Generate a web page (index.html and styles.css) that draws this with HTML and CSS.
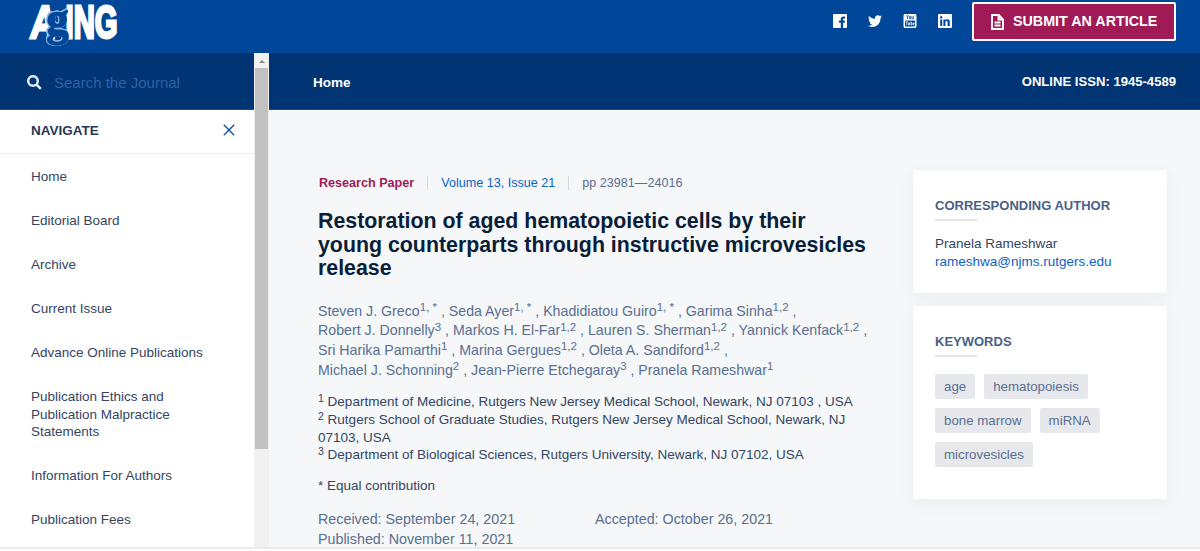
FILE: index.html
```html
<!DOCTYPE html>
<html lang="en">
<head>
    <meta charset="UTF-8">
    <meta name="viewport" content="width=device-width, initial-scale=1.0">
    <title>Aging</title>
    <link rel="stylesheet" href="styles.css">
</head>
<body>
    <header class="header">
        <svg class="logo" width="110" height="53" viewBox="0 0 110 53" role="img" aria-label="Aging">
            <text class="logo-text" x="7" y="37.500" textLength="25" lengthAdjust="spacingAndGlyphs" transform="translate(1.500 0) skewX(-6)">A</text>
            <text class="logo-text" x="40.500" y="37.500" textLength="52" lengthAdjust="spacingAndGlyphs">ING</text>
            <text class="logo-g" x="21.500" y="34.500" textLength="22" lengthAdjust="spacingAndGlyphs">g</text>
        </svg>
        <div class="header-right">
            <svg class="social" viewBox="0 0 14 14"><path fill-rule="evenodd" d="M1 0h12q1 0 1 1v12q0 1-1 1h-3V8.700h1.700l.3-2.100h-2V5.400q0-1 1-1h1.100V2.500q-4.300-.6-4.300 2.600v1.500H6v2.100h1.800V14H1q-1 0-1-1V1q0-1 1-1z"/></svg>
            <svg class="social" viewBox="0 0 14 14"><path d="M14 2.300q-.6.900-1.400 1.500C12.700 9 9 13 4.600 13Q2 13 0 11.700q2.300.2 4.200-1.200-2-.2-2.700-2 .7.100 1.300-.1Q.6 7.800.6 5.500q.6.300 1.200.4Q-.1 4.300 1 2q2.500 2.900 6 3C6.400 1.800 9.700 0 11.900 2q1-.2 1.800-.7-.3 1-1.200 1.600.8-.1 1.500-.6z"/></svg>
            <svg class="social" viewBox="0 0 14 14"><path d="M2 0h10q1.500 0 1.500 2v10q0 2-1.500 2H2q-1.500 0-1.500-2V2q0-2 1.500-2z"/><path class="cut" d="M3.500 1.200l1 2v1.800M5.500 1.200l-1 2M6.300 2.700v2h1.300v-2H6.300M8.900 2.200v2.600h1.500V2.200"/><rect class="cut-fill" x="2" y="6.500" width="10" height="6" rx="1"/><path class="tube" d="M2.800 7.800h2M3.800 7.800v3.400M5.500 8.600v2.300h1V8.600M8 7.500v3.400h1v-2H8M11.200 9.900h-1V9h1v.9M10.200 10v.9h1"/></svg>
            <svg class="social" viewBox="0 0 14 14"><path fill-rule="evenodd" d="M1 0h12q1 0 1 1v12q0 1-1 1H1q-1 0-1-1V1q0-1 1-1zM2.200 5.400V12h2V5.400zM3.200 2.100a1.200 1.200 0 1 0 .01 0zM5.400 5.400V12h2V8.200q.1-1.200 1.200-1.200 1 0 1 1.300V12h2.200V8q0-2.800-2.400-2.800-1.300 0-2 1v-.8z"/></svg>
            <a class="submit" href="#">
                <svg width="13" height="16" viewBox="0 0 13 16"><path d="M1 1h6.700L12 5.300V15H1zM7.500 1v4.500H12M3.500 8.500h6M3.500 11.500h6"/></svg>
                <span>SUBMIT AN ARTICLE</span>
            </a>
        </div>
    </header>

    <div class="page">
        <aside class="sidebar">
            <div class="search">
                <svg width="15" height="15" viewBox="0 0 15 15"><circle cx="6" cy="6" r="4.800"/><path d="M9.500 9.500l4.300 4.300"/></svg>
                <span>Search the Journal</span>
            </div>
            <div class="nav-title">
                <span>NAVIGATE</span>
                <svg width="12" height="12" viewBox="0 0 12 12"><path d="M.8.800l10.400 10.400M11.200.8L.8 11.200"/></svg>
            </div>
            <ul class="nav">
                <li>Home</li>
                <li>Editorial Board</li>
                <li>Archive</li>
                <li>Current Issue</li>
                <li>Advance Online Publications</li>
                <li>Publication Ethics and<br>Publication Malpractice<br>Statements</li>
                <li>Information For Authors</li>
                <li>Publication Fees</li>
            </ul>
        </aside>
        <div class="scrollbar">
            <div class="scroll-up"></div>
            <div class="scroll-thumb"></div>
        </div>

        <main class="main">
            <div class="topbar">
                <span class="crumb">Home</span>
                <span class="issn">ONLINE ISSN: 1945-4589</span>
            </div>
            <div class="content">
                <article class="article">
                    <div class="meta">
                        <span class="type">Research Paper</span>
                        <a class="volume" href="#">Volume 13, Issue 21</a>
                        <span class="pages">pp 23981—24016</span>
                    </div>
                    <h1>Restoration of aged hematopoietic cells by their<br>young counterparts through instructive microvesicles<br>release</h1>
                    <p class="authors">Steven J. Greco<sup>1, *</sup> , Seda Ayer<sup>1, *</sup> , Khadidiatou Guiro<sup>1, *</sup> , Garima Sinha<sup>1,2</sup> ,<br>Robert J. Donnelly<sup>3</sup> , Markos H. El-Far<sup>1,2</sup> , Lauren S. Sherman<sup>1,2</sup> , Yannick Kenfack<sup>1,2</sup> ,<br>Sri Harika Pamarthi<sup>1</sup> , Marina Gergues<sup>1,2</sup> , Oleta A. Sandiford<sup>1,2</sup> ,<br>Michael J. Schonning<sup>2</sup> , Jean-Pierre Etchegaray<sup>3</sup> , Pranela Rameshwar<sup>1</sup></p>
                    <p class="affiliations"><sup>1</sup> Department of Medicine, Rutgers New Jersey Medical School, Newark, NJ 07103 , USA<br><sup>2</sup> Rutgers School of Graduate Studies, Rutgers New Jersey Medical School, Newark, NJ<br>07103, USA<br><sup>3</sup> Department of Biological Sciences, Rutgers University, Newark, NJ 07102, USA</p>
                    <p class="equal">* Equal contribution</p>
                    <div class="dates">
                        <span>Received: September 24, 2021</span>
                        <span>Accepted: October 26, 2021</span>
                        <span>Published: November 11, 2021</span>
                    </div>
                </article>
                <div class="cards">
                    <section class="card author-card">
                        <h2>CORRESPONDING AUTHOR</h2>
                        <p>Pranela Rameshwar<br><a href="#">rameshwa@njms.rutgers.edu</a></p>
                    </section>
                    <section class="card keyword-card">
                        <h2>KEYWORDS</h2>
                        <div class="tags">
                            <span>age</span>
                            <span>hematopoiesis</span>
                            <span>bone marrow</span>
                            <span>miRNA</span>
                            <span>microvesicles</span>
                        </div>
                    </section>
                </div>
            </div>
        </main>
    </div>
</body>
</html>
```

FILE: styles.css
```css
* {
    box-sizing: border-box;
}
body {
    margin: 0;
    height: 551px;
    overflow: hidden;
    background: #fff;
    color: #344563;
    font-family: "Liberation Sans", Arial, sans-serif;
    font-size: 13.5px;
    line-height: 17.6px;
    white-space: nowrap;
}
a {
    color: #0c62c7;
    text-decoration: none;
}
.header {
    display: flex;
    justify-content: space-between;
    height: 53px;
    padding-left: 25px;
    padding-right: 24px;
    background: #004799;
}
.logo {
    overflow: visible;
}
.logo-text {
    font-size: 46px;
    font-weight: bold;
    fill: #fff;
    stroke: #fff;
    stroke-width: 3px;
}
.logo-g {
    font-family: "Liberation Serif", serif;
    font-size: 49px;
    font-weight: bold;
    fill: #004799;
    stroke: #004799;
    stroke-width: 1.6px;
    filter: drop-shadow(0.6px 0 0 #8fb3de) drop-shadow(-0.6px 0 0 #8fb3de) drop-shadow(0 0.5px 0 #8fb3de) drop-shadow(0 -0.5px 0 #8fb3de);
}
.header-right {
    display: flex;
    align-items: flex-start;
}
.social {
    width: 14px;
    height: 14px;
    margin: 14px 21px 0 0;
    fill: #fff;
    position: relative;
    left: 1px;
}
.cut {
    fill: none;
    stroke: #004799;
    stroke-width: 0.8px;
}
.cut-fill {
    fill: #004799;
}
.tube {
    fill: none;
    stroke: #fff;
    stroke-width: 0.8px;
}
.submit {
    display: flex;
    align-items: center;
    width: 204px;
    height: 39px;
    margin-top: 2px;
    padding-left: 17px;
    border: 2px solid #fff;
    border-radius: 2px;
    background: #a01a56;
    color: #fff;
    font-size: 14.3px;
    font-weight: bold;
}
.submit svg {
    margin-right: 9px;
    fill: none;
    stroke: #fff;
    stroke-width: 1.9px;
}
.page {
    display: flex;
    height: 496px;
    border-bottom: 2px solid #e9eaec;
    background: #f5f7f9;
}
.sidebar {
    width: 254px;
    background: #fff;
}
.search {
    display: flex;
    align-items: center;
    height: 57px;
    padding: 3px 0 0 27px;
    border-bottom: 1px solid #1d4f8f;
    background: #003473;
    color: #2d62a5;
    font-size: 15px;
}
.search svg {
    margin-right: 12px;
    fill: none;
    stroke: #dfeaf7;
    stroke-width: 2.5px;
}
.nav-title {
    display: flex;
    align-items: center;
    justify-content: space-between;
    height: 44px;
    padding: 0 19px 1px 31px;
    border-bottom: 1px solid #eceef2;
    color: #253858;
    font-weight: bold;
}
.nav-title svg {
    position: relative;
    top: -1px;
    fill: none;
    stroke: #0b4c9c;
    stroke-width: 1.3px;
}
.nav {
    margin: 0;
    padding: 1px 0 0;
    list-style: none;
}
.nav li {
    padding: 13.2px 0 13.2px 31px;
}
.scrollbar {
    width: 15px;
    padding: 0 1px;
    background: #f1f1f1;
}
.scroll-up {
    height: 15px;
    padding: 7px 3.5px 0;
}
.scroll-up::before {
    content: "";
    display: block;
    width: 0;
    border: 3px solid transparent;
    border-top: 0;
    border-bottom: 3px solid #8a8a8a;
}
.scroll-thumb {
    height: 381px;
    background: #c1c1c1;
}
.main {
    flex: 1;
}
.topbar {
    display: flex;
    justify-content: space-between;
    height: 57px;
    padding: 21px 24px 0 44px;
    border-bottom: 1px solid #1d4f8f;
    background: #003473;
    color: #fff;
    font-weight: bold;
}
.issn {
    margin-top: -1px;
    font-size: 13.1px;
}
.content {
    display: flex;
    padding: 60px 33px 0 49px;
}
.article {
    width: 595px;
}
.meta {
    display: flex;
    padding: 6px 0 0 1px;
    font-size: 12.6px;
    line-height: 14px;
}
.type {
    color: #a01a56;
    font-weight: bold;
}
.volume,
.pages {
    margin-left: 13px;
    padding-left: 13px;
    border-left: 1px solid #d3d7de;
}
.pages {
    color: #5a6f91;
}
h1 {
    margin: 20px 0 0;
    color: #091e38;
    font-size: 21.35px;
    line-height: 23.5px;
}
sup {
    font-size: 81%;
    line-height: 0;
    position: relative;
    top: -0.4em;
    vertical-align: baseline;
}
.authors {
    margin: 21px 0 0;
    color: #5a6f91;
    font-size: 14.2px;
    line-height: 19.7px;
}
.affiliations {
    margin: 13px 0 0;
}
.affiliations sup {
    font-size: 78%;
}
.equal {
    margin: 13px 0 0;
}
.dates {
    display: grid;
    grid-template-columns: 277px 1fr;
    margin-top: 16px;
    color: #5a6f91;
    font-size: 14.3px;
    line-height: 19.7px;
}
.cards {
    width: 254px;
}
.card {
    padding: 27px 22px 0;
    border-radius: 2px;
    background: #fff;
    box-shadow: 0 4px 18px rgba(40, 60, 110, 0.05);
}
.card h2 {
    margin: 0;
    color: #4a6186;
    font-size: 13px;
    line-height: 18px;
}
.card h2::after {
    content: "";
    display: block;
    width: 42px;
    height: 2px;
    margin-top: 4px;
    background: #e3e5ea;
}
.card p {
    margin: 14px 0 0;
    line-height: 18.4px;
}
.author-card {
    height: 123px;
}
.keyword-card {
    height: 193px;
    margin-top: 13px;
}
.tags {
    display: flex;
    flex-wrap: wrap;
    gap: 9px;
    margin-top: 17px;
}
.tags span {
    height: 25px;
    padding: 0 9px;
    border-radius: 2px;
    background: #e6e8ec;
    color: #5a6f91;
    font-size: 13.3px;
    line-height: 26px;
}
```
